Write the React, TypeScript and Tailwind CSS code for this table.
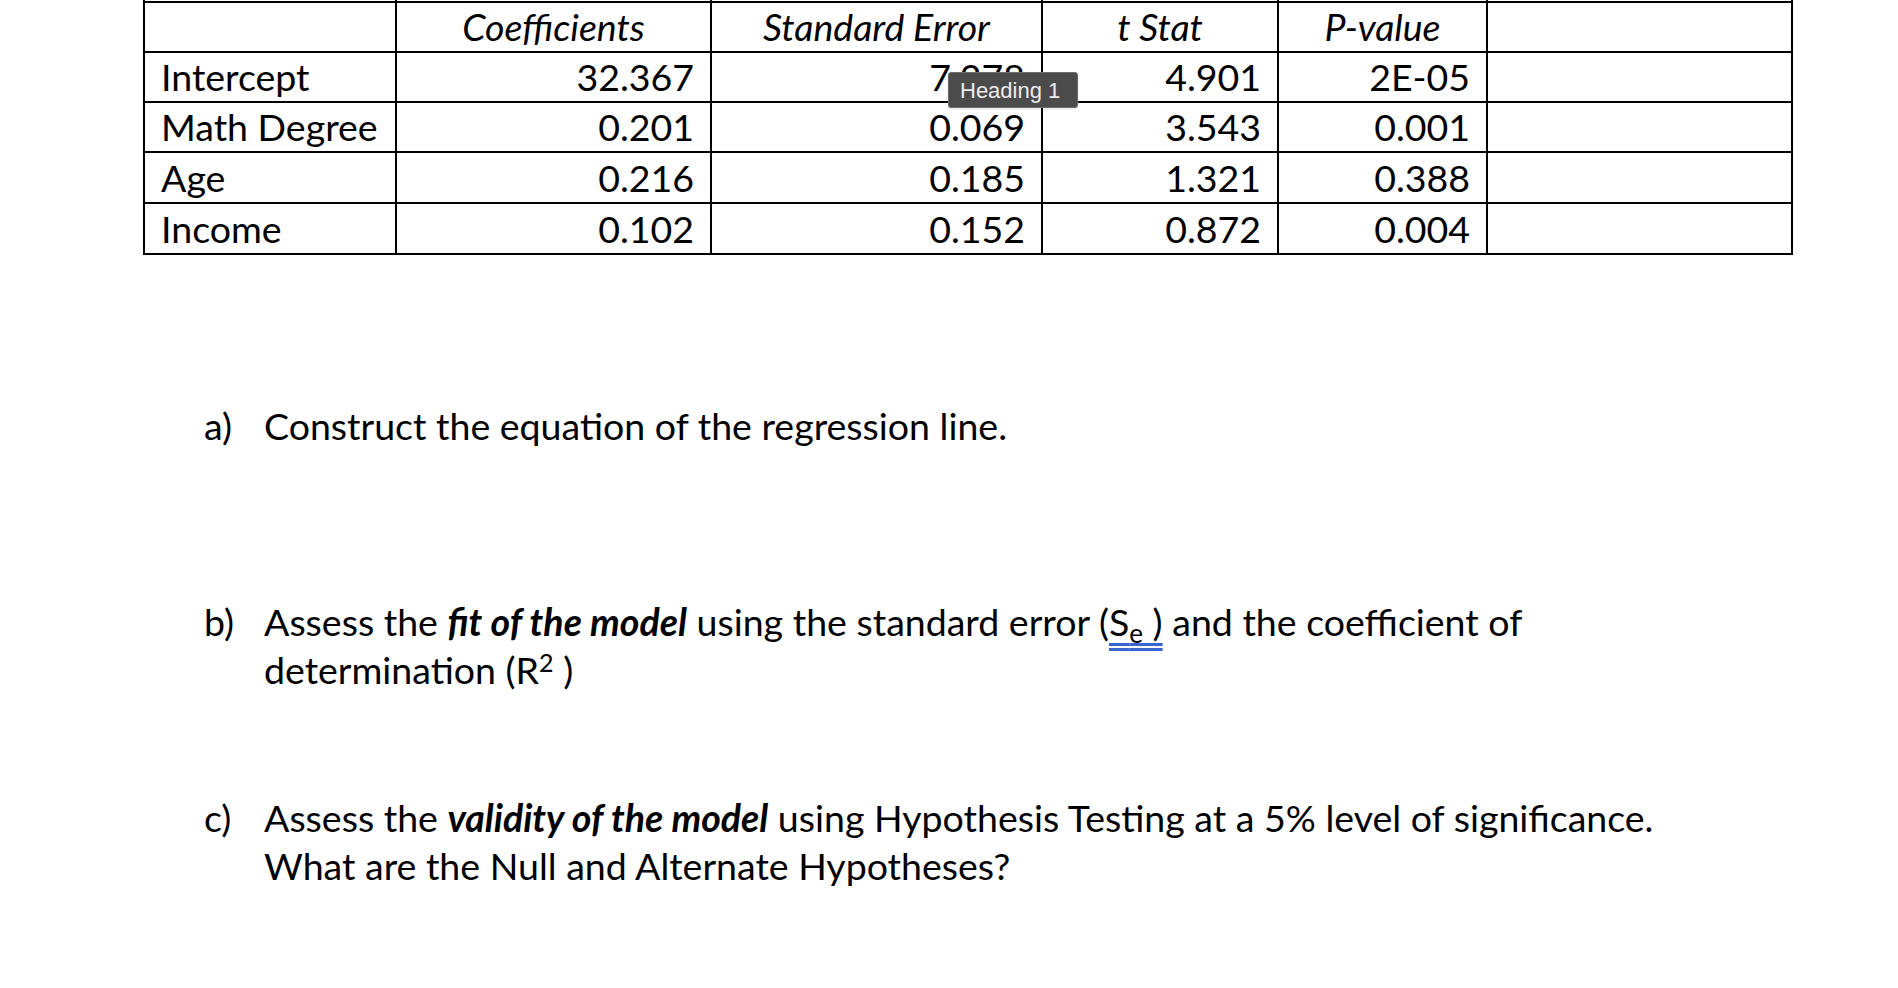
import React from "react"

const rows = [
  { label: "Intercept", coef: "32.367", se: "7.278", t: "4.901", p: "2E-05" },
  { label: "Math Degree", coef: "0.201", se: "0.069", t: "3.543", p: "0.001" },
  { label: "Age", coef: "0.216", se: "0.185", t: "1.321", p: "0.388" },
  { label: "Income", coef: "0.102", se: "0.152", t: "0.872", p: "0.004" },
]

const rowHeights = ["h-[50px]", "h-[50px]", "h-[51px]", "h-[51px]"]

const font = { fontFamily: "Lato, 'Open Sans', sans-serif" }

export default function App() {
  return (
    <div className="relative w-[1898px] h-[988px] bg-white text-black overflow-hidden" style={font}>
      {/* regression output table (top of page is cut off) */}
      <div className="pl-[143px]">
        <table className="table-fixed border-collapse w-[1648px] text-[37.5px] leading-none">
          <colgroup>
            <col className="w-[252px]" />
            <col className="w-[315px]" />
            <col className="w-[331px]" />
            <col className="w-[236px]" />
            <col className="w-[209px]" />
            <col className="w-[305px]" />
          </colgroup>
          <tbody>
            <tr className="h-[2px]">
              {[0, 1, 2, 3, 4, 5].map((i) => (
                <td key={i} className="p-0 border-x-2 border-black" />
              ))}
            </tr>
            <tr className="h-[50px] italic">
              <td className="border-2 border-black" />
              <td className="border-2 border-black text-center">Coefficients</td>
              <td className="border-2 border-black text-center">Standard Error</td>
              <td className="border-2 border-black text-center">t Stat</td>
              <td className="border-2 border-black text-center">P-value</td>
              <td className="border-2 border-black" />
            </tr>
            {rows.map((r, i) => (
              <tr key={r.label} className={rowHeights[i]}>
                <td className="border-2 border-black pl-[16px]">{r.label}</td>
                <td className="border-2 border-black text-right pr-[16px]">{r.coef}</td>
                <td className="border-2 border-black text-right pr-[16px]">{r.se}</td>
                <td className="border-2 border-black text-right pr-[16px]">{r.t}</td>
                <td className="border-2 border-black text-right pr-[16px]">{r.p}</td>
                <td className="border-2 border-black" />
              </tr>
            ))}
          </tbody>
        </table>
      </div>

      {/* questions */}
      <ol className="pl-[204px] text-[37.5px] leading-[48px]">
        <li className="mt-[147px] flex">
          <span className="w-[60px] shrink-0">a)</span>
          <span className="whitespace-nowrap">Construct the equation of the regression line.</span>
        </li>
        <li className="mt-[148px] flex">
          <span className="w-[60px] shrink-0">b)</span>
          <span className="whitespace-nowrap">
            Assess the <b className="italic font-bold">fit of the model</b> using the standard error (
            <span className="underline decoration-double decoration-[#3a64d0] underline-offset-[7px]">
              S<sub className="text-[26px]">e</sub>&nbsp;)
            </span>{" "}
            and the coefficient of
            <br />
            determination (R<sup className="text-[25px]">2</sup> )
          </span>
        </li>
        <li className="mt-[100px] flex">
          <span className="w-[60px] shrink-0">c)</span>
          <span className="whitespace-nowrap">
            Assess the <b className="italic font-bold">validity of the model</b> using Hypothesis Testing at a 5% level of significance.
            <br />
            What are the Null and Alternate Hypotheses?
          </span>
        </li>
      </ol>

      {/* style tooltip floating over the table */}
      <div
        className="absolute left-[948px] top-[72px] w-[130px] h-[36px] bg-[#4b4b4b] border border-[#6e6e6e] rounded-[3px] shadow-sm flex items-center pl-[11px] text-[22px] text-[#ececec]"
        style={{ fontFamily: "'Liberation Sans', Roboto, sans-serif" }}
      >
        Heading 1
      </div>
    </div>
  )
}
